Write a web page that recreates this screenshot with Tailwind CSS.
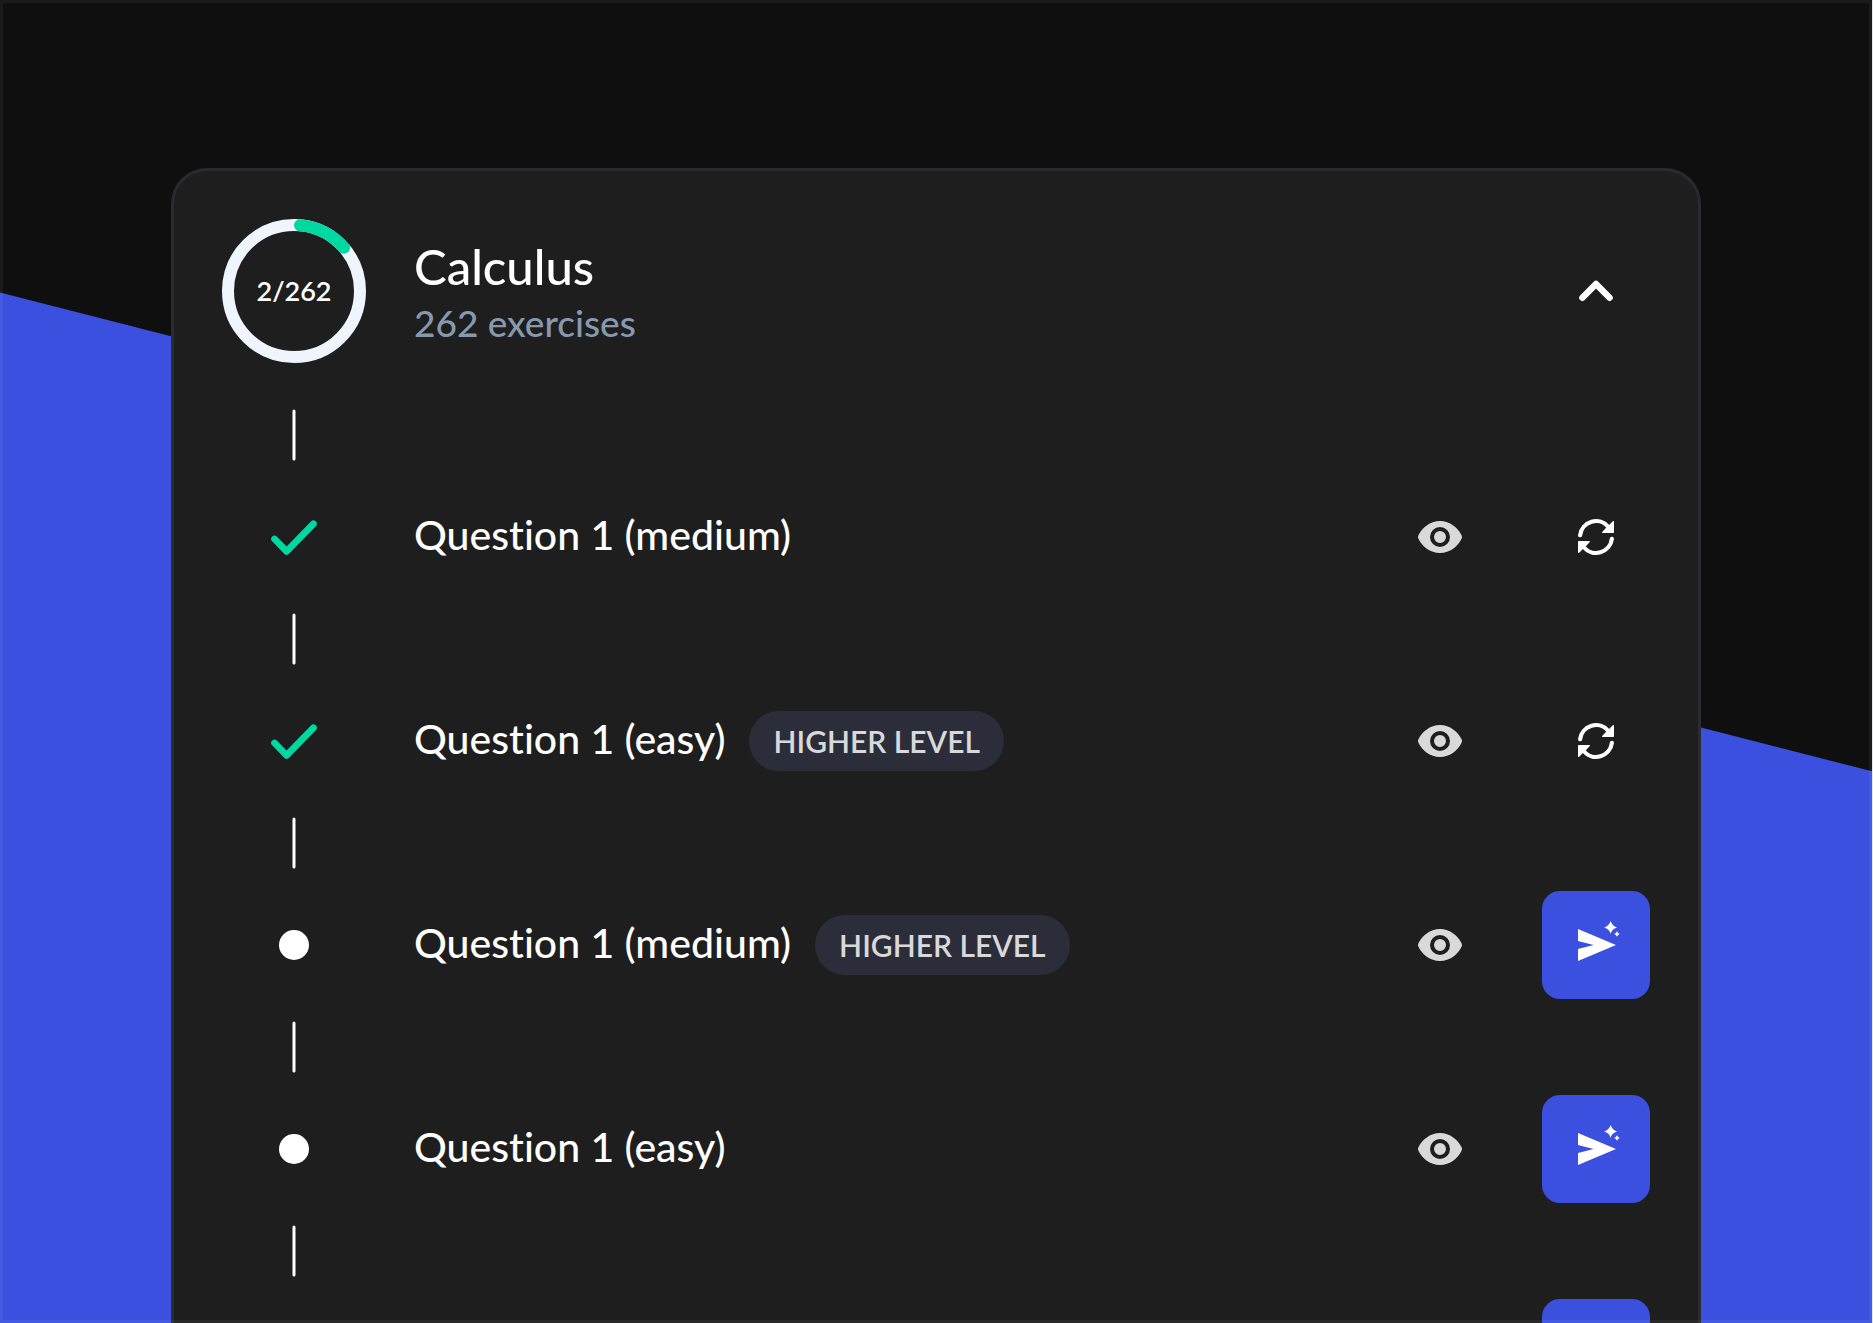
<!DOCTYPE html>
<html lang="en">
<head>
    <meta charset="UTF-8">
    <meta name="viewport" content="width=device-width, initial-scale=1.0">
    <title>Calculus exercises</title>
    <!-- Tailwind CSS via CDN -->
    <script src="https://cdn.jsdelivr.net/npm/@tailwindcss/browser@4"></script>
</head>
<body class="bg-gray-200 font-['Lato',sans-serif] font-medium text-white [font-variant-ligatures:none]">
    <!-- Shared icons -->
    <svg class="hidden" xmlns="http://www.w3.org/2000/svg">
        <symbol id="icon-line" viewBox="0 0 6 96">
            <path d="M3 24v48" stroke="currentColor" stroke-width="3" stroke-linecap="round" />
        </symbol>
        <symbol id="icon-check" viewBox="0 0 24 24">
            <path d="M2.3 13l6 6.2L21.700 5.400" fill="none" stroke="currentColor" stroke-width="3.400" stroke-linecap="round" stroke-linejoin="round" />
        </symbol>
        <symbol id="icon-eye" viewBox="0 0 24 24">
            <path fill="currentColor" fill-rule="evenodd" d="M12 4C7 4 3 7.4 1.1 11.4c-.15.4-.15.8 0 1.2C3 16.6 7 20 12 20s9-3.4 10.9-7.4c.15-.4.15-.8 0-1.2C21 7.4 17 4 12 4zm0 13a5 5 0 1 1 0-10 5 5 0 0 1 0 10zm0-2a3 3 0 1 0 0-6 3 3 0 0 0 0 6z" />
        </symbol>
        <symbol id="icon-retry" viewBox="0 0 24 24">
            <path d="M4.050 11.100A8 8 0 0 1 18.200 7M19.950 12.900A8 8 0 0 1 5.800 17" fill="none" stroke="currentColor" stroke-width="2.100" stroke-linecap="round" />
            <path d="M20.400 4.100q.6-.4.6.3V9.600q0 .4-.4.4H15.400q-.7 0-.3-.5L17.400 7l.9-.8zM3.600 19.900q-.6.4-.6-.3V14.400q0-.4.4-.4h5.200q.7 0 .3.5L6.600 17l-.9.8z" fill="currentColor" />
        </symbol>
        <symbol id="icon-send" viewBox="0 0 24 24">
            <path d="M3 20v-6l7.800-2L3 10V4l19 8z" fill="currentColor" />
            <path d="M19.300 0q.7 2.500 3.200 3.200q-2.500.7-3.200 3.200q-.7-2.500-3.200-3.200q2.500-.7 3.200-3.200zM22.500 5.100q.4 1 1.400 1.400q-1 .4-1.400 1.400q-.4-1-1.400-1.400q1-.4 1.400-1.400z" fill="currentColor" />
        </symbol>
    </svg>

    <div class="relative mr-px h-screen overflow-hidden bg-[#0f0f0f]">
        <!-- Slanted background -->
        <div class="absolute inset-0 bg-[#3b50df] [clip-path:polygon(0_22.1%,100%_58.3%,100%_100%,0_100%)]"></div>

        <main class="relative mx-[171px] mt-[168px] rounded-t-[36px] border-3 border-b-0 border-[#2b2b2f] bg-[#1e1e1e] p-12">
            <!-- Topic header -->
            <header class="flex items-center gap-12 pb-6">
                <div class="relative flex size-36 items-center justify-center">
                    <svg class="absolute inset-0 size-full" viewBox="0 0 144 144" fill="none" stroke-width="12">
                        <circle cx="72" cy="72" r="66" stroke="#f0f5fd" />
                        <path d="M78 6.300A66 66 0 0 1 122 28.800" stroke="#00d8a2" stroke-linecap="round" />
                    </svg>
                    <span class="relative text-[27px] leading-8 font-semibold">2/262</span>
                </div>
                <div class="flex-1 pt-1">
                    <h1 class="text-[49px] leading-[60px]">Calculus</h1>
                    <p class="text-[37px] leading-[54px] text-[#8799ae]">262 exercises</p>
                </div>
                <button type="button" aria-label="Collapse" class="flex size-[108px] items-center justify-center">
                    <svg class="size-12" viewBox="0 0 24 24" fill="none" stroke="currentColor" stroke-width="3.2" stroke-linecap="round" stroke-linejoin="round">
                        <path d="M5.200 15.400L12 8.500l6.800 6.900" />
                    </svg>
                </button>
            </header>

            <!-- Questions -->
            <ul>
                <li>
                    <div class="flex w-36 justify-center"><svg class="h-24 w-1.5"><use href="#icon-line" /></svg></div>
                    <div class="flex items-center gap-12">
                        <div class="flex w-36 justify-center text-[#00d8a2]"><svg class="size-12"><use href="#icon-check" /></svg></div>
                        <div class="flex flex-1 items-center gap-6">
                            <h2 class="pb-1 text-[41px] leading-[60px]">Question 1 (medium)</h2>
                        </div>
                        <button type="button" aria-label="View" class="flex size-[108px] items-center justify-center text-[#d9d9d9]"><svg class="size-12"><use href="#icon-eye" /></svg></button>
                        <button type="button" aria-label="Retry" class="flex size-[108px] items-center justify-center"><svg class="size-12"><use href="#icon-retry" /></svg></button>
                    </div>
                </li>
                <li>
                    <div class="flex w-36 justify-center"><svg class="h-24 w-1.5"><use href="#icon-line" /></svg></div>
                    <div class="flex items-center gap-12">
                        <div class="flex w-36 justify-center text-[#00d8a2]"><svg class="size-12"><use href="#icon-check" /></svg></div>
                        <div class="flex flex-1 items-center gap-6">
                            <h2 class="pb-1 text-[41px] leading-[60px]">Question 1 (easy)</h2>
                            <span class="rounded-full bg-[#2c2d3a] px-6 text-[30px] leading-[60px] font-semibold text-[#d9d9d9]">HIGHER LEVEL</span>
                        </div>
                        <button type="button" aria-label="View" class="flex size-[108px] items-center justify-center text-[#d9d9d9]"><svg class="size-12"><use href="#icon-eye" /></svg></button>
                        <button type="button" aria-label="Retry" class="flex size-[108px] items-center justify-center"><svg class="size-12"><use href="#icon-retry" /></svg></button>
                    </div>
                </li>
                <li>
                    <div class="flex w-36 justify-center"><svg class="h-24 w-1.5"><use href="#icon-line" /></svg></div>
                    <div class="flex items-center gap-12">
                        <div class="flex w-36 justify-center"><span class="size-[30px] rounded-full bg-white"></span></div>
                        <div class="flex flex-1 items-center gap-6">
                            <h2 class="pb-1 text-[41px] leading-[60px]">Question 1 (medium)</h2>
                            <span class="rounded-full bg-[#2c2d3a] px-6 text-[30px] leading-[60px] font-semibold text-[#d9d9d9]">HIGHER LEVEL</span>
                        </div>
                        <button type="button" aria-label="View" class="flex size-[108px] items-center justify-center text-[#d9d9d9]"><svg class="size-12"><use href="#icon-eye" /></svg></button>
                        <button type="button" aria-label="Start" class="flex size-[108px] items-center justify-center rounded-[18px] bg-[#3b50df]"><svg class="size-12"><use href="#icon-send" /></svg></button>
                    </div>
                </li>
                <li>
                    <div class="flex w-36 justify-center"><svg class="h-24 w-1.5"><use href="#icon-line" /></svg></div>
                    <div class="flex items-center gap-12">
                        <div class="flex w-36 justify-center"><span class="size-[30px] rounded-full bg-white"></span></div>
                        <div class="flex flex-1 items-center gap-6">
                            <h2 class="pb-1 text-[41px] leading-[60px]">Question 1 (easy)</h2>
                        </div>
                        <button type="button" aria-label="View" class="flex size-[108px] items-center justify-center text-[#d9d9d9]"><svg class="size-12"><use href="#icon-eye" /></svg></button>
                        <button type="button" aria-label="Start" class="flex size-[108px] items-center justify-center rounded-[18px] bg-[#3b50df]"><svg class="size-12"><use href="#icon-send" /></svg></button>
                    </div>
                </li>
                <li>
                    <div class="flex w-36 justify-center"><svg class="h-24 w-1.5"><use href="#icon-line" /></svg></div>
                    <div class="flex justify-end">
                        <button type="button" aria-label="Start" class="size-[108px] rounded-[18px] bg-[#3b50df]"></button>
                    </div>
                </li>
            </ul>
        </main>

        <!-- Frame around the whole view -->
        <div class="pointer-events-none absolute inset-0 border-3 border-white/5"></div>
    </div>
</body>
</html>
